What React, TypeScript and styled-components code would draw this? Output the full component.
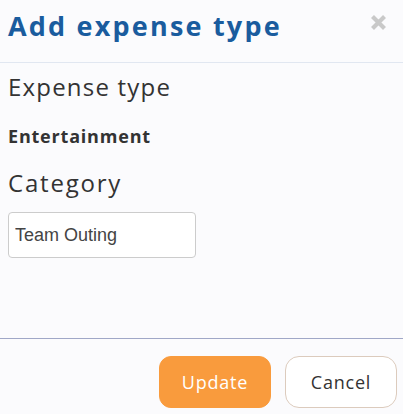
import React from 'react';
import styled, { createGlobalStyle } from 'styled-components';

const GlobalStyle = createGlobalStyle`
  html, body {
    margin: 0;
    padding: 0;
    background: #fbfbfd;
  }
  * {
    box-sizing: border-box;
  }
`;

const App = () => {
  return (
    <>
      <GlobalStyle />
      <Modal>
        <Header>
          <Title>Add expense type</Title>
          <CloseButton aria-label="Close">
            <svg width="17" height="17" viewBox="0 0 17 17">
              <path d="M2.5 2.5 L14.5 14.5 M14.5 2.5 L2.5 14.5" stroke="#c9c9c9" strokeWidth="4.2" />
            </svg>
          </CloseButton>
        </Header>

        <Body>
          <Label>Expense type</Label>
          <Value>Entertainment</Value>
          <Label $spacing={1.8} $mt={22}>
            Category
          </Label>
          <TextInput defaultValue="Team Outing" />
        </Body>

        <Footer>
          <Button $primary>Update</Button>
          <Button>Cancel</Button>
        </Footer>
      </Modal>
    </>
  );
};

export default App;

const Modal = styled.div`
  display: flex;
  flex-direction: column;
  height: 414px;
  width: 403px;
  background: #fbfbfd;
  font-family: 'Open Sans', 'Liberation Sans', sans-serif;
`;

const Header = styled.div`
  display: flex;
  justify-content: space-between;
  align-items: flex-start;
  padding: 10px 16px 20px 8px;
  border-bottom: 1px solid #e1e7f1;
`;

const Title = styled.h1`
  margin: 0;
  font-size: 27px;
  line-height: 32px;
  font-weight: 700;
  letter-spacing: 2.2px;
  color: #1a5c9e;
`;

const CloseButton = styled.button`
  display: flex;
  border: 0;
  padding: 0;
  margin-top: 4px;
  background: none;
  cursor: pointer;
`;

const Body = styled.div`
  flex: 1;
  display: flex;
  flex-direction: column;
  align-items: flex-start;
  padding: 10px 8px;
`;

const Label = styled.div<{ $spacing?: number; $mt?: number }>`
  margin-top: ${(p) => p.$mt || 0}px;
  font-size: 24px;
  line-height: 1.2;
  font-weight: 400;
  letter-spacing: ${(p) => p.$spacing ?? 1.2}px;
  color: #333;
`;

const Value = styled.div`
  margin-top: 24px;
  font-size: 18px;
  line-height: 1.2;
  font-weight: 700;
  letter-spacing: 0.8px;
  color: #333;
`;

const TextInput = styled.input`
  margin-top: 14px;
  width: 188px;
  height: 46px;
  padding: 0 6px;
  border: 1px solid #cccccc;
  border-radius: 4px;
  background: #fff;
  font-family: 'Liberation Sans', Arial, sans-serif;
  font-size: 18px;
  color: #444;
  outline: none;
`;

const Footer = styled.div`
  display: flex;
  justify-content: flex-end;
  gap: 14px;
  padding: 17px 6px 6px;
  border-top: 1px solid #a0a7c7;
`;

const Button = styled.button<{ $primary?: boolean }>`
  width: 112px;
  height: 52px;
  border-radius: ${(p) => (p.$primary ? '12px' : '14px')};
  border: 1px solid ${(p) => (p.$primary ? '#f99b3d' : '#dccbbd')};
  background: ${(p) => (p.$primary ? '#f99b3d' : '#fff')};
  color: ${(p) => (p.$primary ? '#fff' : '#333')};
  font-family: 'Open Sans', sans-serif;
  font-size: 18px;
  letter-spacing: 0.8px;
  cursor: pointer;
`;
